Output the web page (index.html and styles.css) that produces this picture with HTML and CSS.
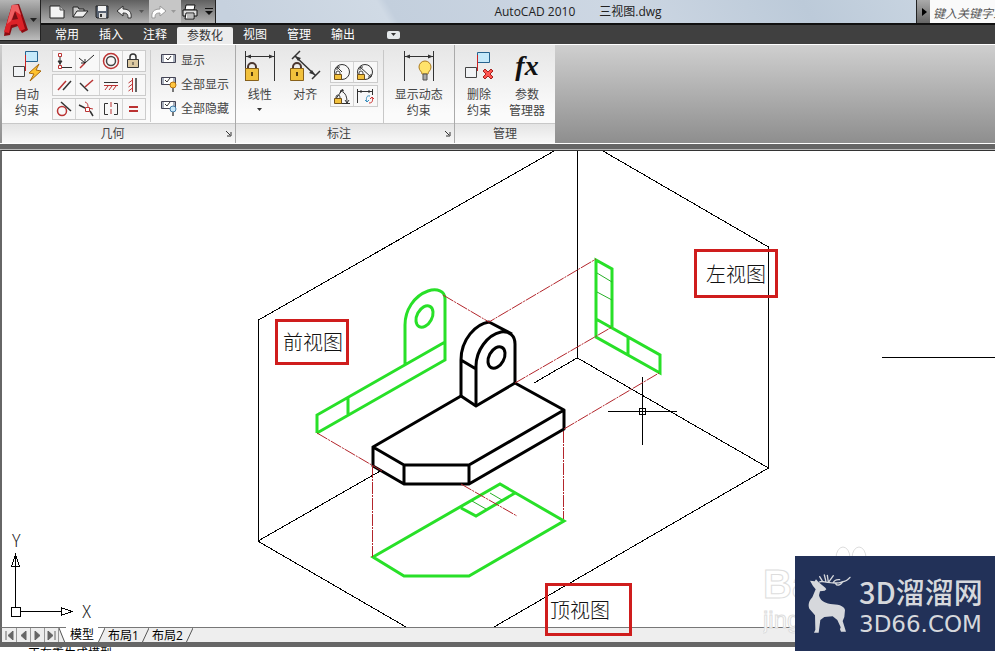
FILE: index.html
```html
<!DOCTYPE html>
<html lang="zh-CN">
<head>
<meta charset="utf-8">
<title>AutoCAD 2010 三视图.dwg</title>
<link rel="stylesheet" href="styles.css">
</head>
<body>
<header class="top">
  <button class="app" aria-label="应用程序菜单">
    <svg width="40" height="40" viewBox="0 0 40 40"><path d="M4 36 5 29 12 5l7-1 9 26-6 3-4-7-6 2-2 7z" fill="#8d0b11"/><path d="M4 32 12 5h6l7 24-5 2-3-7-6 1-2 8z" fill="#dc2228"/><path d="m12 20 3-9 3 8z" fill="#7a1015"/><path d="M12 5h6l3 10-6-4-4 10-4 3z" fill="#ff9b9b" opacity=".5"/><path d="M30 18h7l-3.500 4z" fill="#222"/></svg>
  </button>
  <div class="top-main">
    <div class="titlebar">
      <div class="quick">
        <button aria-label="新建"><svg width="18" height="18" viewBox="0 0 18 18"><path d="M2 3h10l4 4v8H2z" fill="#f3f3f3" stroke="#222"/><path d="M12 3v4h4" fill="#bbb" stroke="#555"/></svg></button>
        <button aria-label="打开"><svg width="18" height="18" viewBox="0 0 18 18"><path d="M2 14V4h5l1 2h5v3" fill="#ccc" stroke="#222"/><path d="m2 14 4-6h11l-5 6z" fill="#eee" stroke="#222"/></svg></button>
        <button aria-label="保存"><svg width="18" height="18" viewBox="0 0 18 18"><path d="M3 3h12v12H4l-1-1z" fill="#596372" stroke="#222"/><path d="M5 3h8v5H5z" fill="#f3f3f3"/><path d="M6 10h7v5H6z" fill="#ddd"/><path d="M7 11h2v3H7z" fill="#333"/></svg></button>
        <button aria-label="放弃"><svg width="18" height="18" viewBox="0 0 18 18"><path d="m1 8 6-5v3c6 0 9 3 8 9h-3c0-4-1-5-5-5v3z" fill="#eee" stroke="#333"/></svg></button>
        <button class="drop" aria-label="放弃列表"><svg width="5" height="4"><path d="M0 0h5L2.500 3z" fill="#555"/></svg></button>
        <button class="pale" aria-label="重做"><svg width="18" height="18" viewBox="0 0 18 18"><path d="m17 8-6-5v3c-6 0-9 3-8 9h3c0-4 1-5 5-5v3z" fill="#fff" stroke="#999"/></svg></button>
        <button class="drop pale" aria-label="重做列表"><svg width="5" height="4"><path d="M0 0h5L2.500 3z" fill="#999"/></svg></button>
        <button aria-label="打印"><svg width="18" height="18" viewBox="0 0 18 18"><path d="M5 2h9l-1 5H4z" fill="#fff" stroke="#111"/><path d="M2 7h14v6H2z" fill="#ddd" stroke="#111"/><path d="M5 10h8v6H4z" fill="#fff" stroke="#111"/><path d="M6 12h6M6 14h6" stroke="#777"/></svg></button>
        <button class="drop" aria-label="自定义"><svg width="8" height="8"><path d="M0 .5h8" stroke="#111"/><path d="M0 3h8L4 7z" fill="#111"/></svg></button>
      </div>
      <h1 class="title"><span>AutoCAD 2010</span><span>三视图.dwg</span></h1>
      <div class="search">
        <button aria-label="展开搜索"><svg width="5" height="8"><path d="M0 0v8l5-4z" fill="#000"/></svg></button>
        <input type="text" aria-label="搜索" placeholder="键入关键字或短语">
      </div>
    </div>
    <nav class="tabs">
      <button>常用</button><button>插入</button><button>注释</button><button class="on">参数化</button><button>视图</button><button>管理</button><button>输出</button>
      <button class="min" aria-label="最小化功能区"><svg width="13" height="8"><rect width="13" height="8" rx="2" fill="#e4e8ea"/><path d="M4 2h5L6.500 5z" fill="#333"/></svg></button>
    </nav>
  </div>
</header>

<main class="ribbon">
  <section class="panel geo">
    <div class="body">
      <button class="big"><svg width="32" height="32" viewBox="0 0 32 32"><path d="M14.500 1.500h12v10h-12z" fill="#c5e9fa" stroke="#27638e"/><path d="M2.500 16.500h11v10h-11z" fill="#f1f3f5" stroke="#444"/><path d="M14.500 5v16" stroke="#c22"/><path d="m28 14-10 9 5 1-4 7 11-10-5-1z" fill="#ffc22d" stroke="#a8690b"/></svg><span>自动<br>约束</span></button>
      <div class="grid four">
        <button aria-label="重合"><svg viewBox="0 0 22 20"><path d="M7 5v10" stroke="#333"/><path d="m5 10 2 3 2-3zM9 16.500h10" stroke="#333" fill="#333"/><path d="M5.500 2.500h3v3h-3zM5.500 14.500h3v3h-3z" fill="#fff" stroke="#b33"/></svg></button>
        <button aria-label="共线"><svg viewBox="0 0 22 20"><path d="m4 17 5-5" stroke="#b33" stroke-width="1.500"/><path d="m9 12 9-8M3 7l6 5M9 8v4H5" stroke="#222" fill="none"/></svg></button>
        <button aria-label="同心"><svg viewBox="0 0 22 20"><circle cx="11" cy="10" r="7.500" fill="none" stroke="#b33" stroke-width="1.500"/><circle cx="11" cy="10" r="4.500" fill="none" stroke="#444" stroke-width="1.500"/></svg></button>
        <button aria-label="固定"><svg viewBox="0 0 22 20"><path d="M7 9V6a3 3 0 0 1 6 0v3" fill="none" stroke="#333" stroke-width="1.500"/><path d="M4.500 8.500h11v8h-11z" fill="#dcc9a1" stroke="#333"/><path d="M10 11v3" stroke="#333"/></svg></button>
      </div>
      <div class="grid four">
        <button aria-label="平行"><svg viewBox="0 0 22 20"><path d="m5 15 8-9" stroke="#b33" stroke-width="1.500"/><path d="m10 15 8-9" stroke="#333" stroke-width="1.500"/></svg></button>
        <button aria-label="垂直"><svg viewBox="0 0 22 20"><path d="m4 8 8 8" stroke="#333" stroke-width="1.500"/><path d="m9 12 8-7" stroke="#b33" stroke-width="1.500"/></svg></button>
        <button aria-label="水平"><svg viewBox="0 0 22 20"><path d="M4 7.500h14" stroke="#333"/><path d="M4 10.500h14M8 11l-3 4m7-4-3 4m7-4-3 4" stroke="#b33"/></svg></button>
        <button aria-label="竖直"><svg viewBox="0 0 22 20"><path d="M13 3v14" stroke="#333" stroke-width="1.500"/><path d="M9.500 3v14m0-12-4 3m4 1-4 3m4 1-4 3" stroke="#b33"/></svg></button>
      </div>
      <div class="grid four">
        <button aria-label="相切"><svg viewBox="0 0 22 20"><circle cx="9" cy="12" r="4.500" fill="none" stroke="#b33" stroke-width="1.500"/><path d="m8 3 10 9" stroke="#333" stroke-width="1.500"/></svg></button>
        <button aria-label="平滑"><svg viewBox="0 0 22 20"><path d="m3 6 6 3m5 3 3 5" stroke="#333" stroke-width="1.500" fill="none"/><path d="M9 3c3 1 3 3 3 6l5 1" stroke="#b33" fill="none"/><path d="M9.500 8.500h4v4h-4z" fill="#fff" stroke="#b33"/></svg></button>
        <button aria-label="对称"><svg viewBox="0 0 22 20"><path d="M8 4.500H4.500v11H8m6-11h3.500v11H14" fill="none" stroke="#333"/><path d="M11 3v14" stroke="#b33" stroke-dasharray="5 2"/></svg></button>
        <button aria-label="相等"><svg viewBox="0 0 22 20"><path d="M6 8h9M6 12h9" stroke="#b33" stroke-width="2"/></svg></button>
      </div>
      <div class="list">
        <button><svg width="17" height="17" viewBox="0 0 17 17"><path d="M1.500 2.500h14v8h-14z" fill="#aab1bd" stroke="#445"/><path d="M4 3h9v7H4z" fill="#fff"/><path d="m6 6 2 2 3-4" fill="none" stroke="#333"/></svg>显示</button>
        <button><svg width="17" height="17" viewBox="0 0 17 17"><path d="M1.500 1.500h14v7h-14z" fill="#aab1bd" stroke="#445"/><path d="M4 2h9v6H4z" fill="#fff"/><path d="m5 4 2 2 3-4" fill="none" stroke="#333"/><circle cx="13" cy="9" r="3" fill="#ffc640" stroke="#b5730e"/><path d="M12 12h2v4h-2z" fill="#777"/></svg>全部显示</button>
        <button><svg width="17" height="17" viewBox="0 0 17 17"><path d="M1.500 1.500h14v7h-14z" fill="#aab1bd" stroke="#445"/><path d="M4 2h9v6H4z" fill="#fff"/><path d="m5 4 2 2 3-4" fill="none" stroke="#333"/><circle cx="13" cy="9" r="3" fill="#c8e8fa" stroke="#407ba8"/><path d="M12 12h2v4h-2z" fill="#777"/></svg>全部隐藏</button>
      </div>
    </div>
    <h2>几何<svg class="launch" width="6" height="6"><path d="m0 0 4 4M5 1v4H1" stroke="#333" fill="none"/></svg></h2>
  </section>

  <section class="panel dim">
    <div class="body">
      <button class="big"><svg width="32" height="32" viewBox="0 0 32 32"><path d="M1.500 1v30M30.500 1v30M2 6.500h28" stroke="#333"/><path d="m2 6.500 5-2v4zM30 6.500l-5-2v4z" fill="#333"/><path d="M4 19v-2a4 4 0 0 1 8 0v2" fill="none" stroke="#4b3730" stroke-width="2"/><path d="M1.500 18.500h13v12h-13z" fill="#f2c13c" stroke="#88611a"/><path d="M8 22v4" stroke="#553b0e" stroke-width="2"/></svg><span>线性</span><svg width="5" height="3"><path d="M0 0h5L2.500 3z" fill="#333"/></svg></button>
      <button class="big"><svg width="32" height="32" viewBox="0 0 32 32"><path d="m3 9 8-8m12 28 8-8M6 6l20 19" stroke="#333" stroke-width="1.500"/><path d="m6 6 6 2-3 3zM26 25l-6-2 3-3z" fill="#333"/><path d="M4 19v-2a4 4 0 0 1 8 0v2" fill="none" stroke="#4b3730" stroke-width="2"/><path d="M1.500 18.500h13v12h-13z" fill="#f2c13c" stroke="#88611a"/><path d="M8 22v4" stroke="#553b0e" stroke-width="2"/></svg><span>对齐</span></button>
      <div class="pair">
        <div class="grid two">
          <button aria-label="半径"><svg viewBox="0 0 22 20"><circle cx="11" cy="10" r="7.500" fill="none" stroke="#333"/><path d="m11 10-5-5m0 3V5h3" stroke="#333" fill="none"/><path d="M5 12v-1a2 2 0 0 1 4 0v1" fill="none" stroke="#444"/><path d="M3.500 12.500h7v5h-7z" fill="#f2c13c" stroke="#71501a"/></svg></button>
          <button aria-label="直径"><svg viewBox="0 0 22 20"><circle cx="11" cy="10" r="7.500" fill="none" stroke="#333"/><path d="m6 5 11 10M6 8V5h3m8 7v3h-3" stroke="#333" fill="none"/><path d="M5 12v-1a2 2 0 0 1 4 0v1" fill="none" stroke="#444"/><path d="M3.500 12.500h7v5h-7z" fill="#f2c13c" stroke="#71501a"/></svg></button>
        </div>
        <div class="grid two">
          <button aria-label="角度"><svg viewBox="0 0 22 20"><path d="m4 14 8-11M4 17.500h15M10 5c5 2 6 6 6 12M9 7l1-3 3 1m1 9 2 3 2-3" fill="none" stroke="#333"/><path d="M5 12v-1a2 2 0 0 1 4 0v1" fill="none" stroke="#444"/><path d="M3.500 12.500h7v5h-7z" fill="#f2c13c" stroke="#71501a"/></svg></button>
          <button aria-label="转换"><svg viewBox="0 0 22 20"><path d="M3.500 3v14M18.500 3v6M4 5.500h14M7 4v3m8-3v3" stroke="#333"/><path d="M16 10c-4-1-4 3-3 6m-2-2 2 2 2-2" stroke="#368cbd" fill="none"/><path d="M15 17c4 0 4-3 3-6m-2 2 2-2 2 2" stroke="#c33" fill="none"/></svg></button>
        </div>
      </div>
      <button class="big wide"><svg width="32" height="32" viewBox="0 0 32 32"><path d="M1.500 1v30M30.500 1v30M2 6.500h28" stroke="#333"/><path d="m2 6.500 5-2v4zM30 6.500l-5-2v4z" fill="#333"/><path d="M19 24c0-3-3-3-3-7a5.500 5.500 0 0 1 12 0c0 4-3 4-3 7z" fill="#ffe36b" stroke="#ad7c1f"/><path d="M20 24h4v6h-4z" fill="#aaa" stroke="#555"/></svg><span>显示动态<br>约束</span></button>
    </div>
    <h2>标注<svg class="launch" width="6" height="6"><path d="m0 0 4 4M5 1v4H1" stroke="#333" fill="none"/></svg></h2>
  </section>

  <section class="panel manage">
    <div class="body">
      <button class="big"><svg width="32" height="32" viewBox="0 0 32 32"><path d="M14.500 2.500h12v10h-12z" fill="#c5e9fa" stroke="#27638e"/><path d="M2.500 17.500h11v10h-11z" fill="#f1f3f5" stroke="#444"/><path d="M14.500 5v16" stroke="#c22"/><path d="m20 21 2-2 3 3 3-3 2 2-3 3 3 3-2 2-3-3-3 3-2-2 3-3z" fill="#ff5550" stroke="#a5221f"/></svg><span>删除<br>约束</span></button>
      <button class="big"><i class="fx">fx</i><span>参数<br>管理器</span></button>
    </div>
    <h2>管理</h2>
  </section>
</main>

<div class="splitter"></div>

<section class="canvas">
  <svg class="drawing" role="img" aria-label="三视图">
    <g transform="translate(-2 -151)" fill="none">
      <g class="thin">
        <path d="M554 151 258.500 320v221.500L406 627M577.500 151v207L768.500 468 494 627M603 151l165.500 96v221M577 358l-43 25M382 470l-124 71M882 357.500h2000"/>
        <path d="M608 411.500h69M642.500 377v68M639.500 408.500h6v6h-6z"/>
        <path d="M11.500 607.500h9v9h-9zM15.500 607v-41M20 611.500h41"/>
        <path d="m15.500 555-4 11.500h8zM15.500 557v9M72 611.500l-11-4v8z"/>
      </g>
      <g class="green">
        <path d="M317 433v-18l128-73M317 433l128-73v-61c0-8-8-11-17-8-14 5-23 19-23 34v39M348 397v18"/>
        <ellipse cx="424.500" cy="316.500" rx="7.500" ry="11.500" transform="rotate(28 424.500 316.500)"/>
        <path d="M596 319v-59l16 9v59M596 319v18l64 36v-18zM628 338v17"/>
        <path d="m373 557 127-73 64 37-95 55h-65zM461 508l15 8 39-23"/>
      </g>
      <path class="hair" d="m597 273 15 9m-15 10 15 8m-140 201 14 8m4-16 12 7"/>
      <g class="solid">
        <path d="m461 396-88 51 31 18h65l95-55-49-27-39 23zM373 447v19l31 18h65l95-55v-19M404 465v19M469 465v19"/>
        <path d="M461 396v-36l15 9M461 360c0-21 15-36 28-38l23 12M476 406v-40c0-15 11-31 25-34 9-1 14 4 14 12v40"/>
        <ellipse cx="496.500" cy="357.500" rx="7.500" ry="11.500" transform="rotate(28 496.500 357.500)"/>
      </g>
      <g class="axis">
        <path d="m443 295 46 27 107-63M515 383l97-56M564 429l95-56M317 433l65 38M461 484l56 32"/>
        <path d="M372.500 466v91M563.500 431v88"/>
      </g>
      <text x="12" y="547">Y</text>
      <text x="82" y="618">X</text>
    </g>
  </svg>
  <span class="note front">前视图</span>
  <span class="note left">左视图</span>
  <span class="note plan">顶视图</span>
</section>

<footer class="layouts">
  <button class="nav" aria-label="第一个"><svg width="9" height="9"><path d="M1 0v9M8 0v9L3 4.500z"/></svg></button>
  <button class="nav" aria-label="上一个"><svg width="9" height="9"><path d="M7 0v9L2 4.500z"/></svg></button>
  <button class="nav" aria-label="下一个"><svg width="9" height="9"><path d="M2 0v9l5-4.500z"/></svg></button>
  <button class="nav" aria-label="最后一个"><svg width="9" height="9"><path d="M8 0v9M1 0v9l5-4.500z"/></svg></button>
  <svg class="slant" width="7" height="15"><path d="M0 0h7v15z" fill="#fff"/><path d="m0 0 6 15"/></svg>
  <button class="sheet on">模型</button>
  <svg class="slant" width="7" height="15"><path d="M0 0h7L0 15z" fill="#fff"/><path d="M7 0 0 15"/></svg>
  <button class="sheet">布局1</button>
  <svg class="slant" width="7" height="15"><path d="M7 0 0 15"/></svg>
  <button class="sheet">布局2</button>
  <svg class="slant" width="7" height="15"><path d="M7 0 0 15"/></svg>
</footer>
<div class="command">正在重生成模型。</div>

<div class="ghost"><svg width="36" height="16"><ellipse cx="10" cy="12" rx="7" ry="11"/><ellipse cx="26" cy="12" rx="7" ry="11"/></svg><b>Bai</b><span>jingyan</span></div>
<aside class="brand">
  <svg width="45" height="60" viewBox="200 130 135 180"><path d="m209 153 14 2 4-6 8 9 20 16 3 5-5 4-14 2-3 12c3 15 15 23 34 26 20 1 42 4 44 18l-2 21-5 12 10 32h-15l-3-7 2-6-10-22-14-11-25 2-12 9-5 38h-14l4-9-1-43-17-20c-5-12 0-25 9-34l10-24-8-10z" fill="#d6d8dc"/><path d="M237 157c9-4 14 0 24 1 23 3 30 4 43-1 12-2 18-5 25-14M247 156l-9-15M257 156l-5-20M264 157l-3-20M266 156l13-18M278 160c4-10 10-11 20-10M286 162c4 8 14 4 20-4" fill="none" stroke="#d6d8dc" stroke-width="4" stroke-linecap="round"/></svg>
  <div><strong>3D溜溜网</strong><span>3D66.COM</span></div>
</aside>
</body>
</html>
```
FILE: styles.css
```css
* { box-sizing: border-box; }
body {
  margin: 0;
  height: 100vh;
  display: flex;
  flex-direction: column;
  position: relative;
  overflow: hidden;
  background: #fff;
  font: 12px/16px "Open Sans", "Noto Sans CJK SC", sans-serif;
  color: #444;
}
button {
  border: 0;
  padding: 0;
  margin: 0;
  background: none;
  font: inherit;
  color: inherit;
}
svg { display: block; flex: none; }
h1, h2 { margin: 0; font: inherit; }

.top { display: flex; background: #404040; }
.app {
  width: 41px;
  height: 41px;
  border: solid #222;
  border-width: 0 1px 1px 0;
  background: linear-gradient(#b5b5b5, #777 50%, #bdbdbd);
}
.top-main { flex: 1; min-width: 0; }
.titlebar {
  display: flex;
  height: 25px;
  border-bottom: 2px solid #111;
  background: linear-gradient(60deg, #c6d1de 20%, #d0dae5 36%, #c3cfdd 37%, #cdd7e3 60%, #bccad9 80%, #cfdae5);
}
.quick {
  display: flex;
  align-items: center;
  width: 175px;
  padding-left: 7px;
  border-right: 1px solid #222;
  background: linear-gradient(#606060, #b0b0b0);
}
.quick button { width: 23px; height: 100%; display: flex; align-items: center; }
.quick .drop { width: 10px; }
.quick .pale { background: #c6c6c6; }
.quick button:last-child { margin-left: 1px; }
.title {
  flex: 1;
  display: flex;
  justify-content: center;
  gap: 24px;
  padding-left: 24px;
  line-height: 24px;
  color: #222;
}
.search { width: 79px; display: flex; overflow: hidden; }
.search button {
  width: 14px;
  flex: none;
  padding-left: 5px;
  background: linear-gradient(#aaa, #666);
  border-left: 1px solid #222;
}
.search input {
  width: 120px;
  flex: none;
  border: 0;
  padding: 4px 3px 0;
  background: #fafafa;
  font: italic 12px/16px "Open Sans", "Noto Sans CJK SC", sans-serif;
}
.search input::placeholder { color: #555; }
.tabs { display: flex; height: 19px; padding-left: 4px; color: #fff; }
.tabs button { padding: 0 10px; line-height: 20px; }
.tabs .on {
  margin-top: 2px;
  line-height: 18px;
  background: #ededed;
  color: #333;
  border-radius: 2px 2px 0 0;
}
.tabs .min { margin-left: 12px; }

.ribbon {
  display: flex;
  height: 100px;
  padding-left: 2px;
  border: solid #fff;
  border-width: 1px 0;
  background: linear-gradient(#cfcfcf, #8e8e8e);
}
.panel {
  display: flex;
  flex-direction: column;
  border-right: 1px solid #aaa;
  background: linear-gradient(#e6e6e6, #fbfbfb 70%);
}
.geo { width: 234px; }
.dim { width: 219px; }
.manage { width: 100px; border: 0; }
.body { flex: 1; display: flex; position: relative; padding-top: 5px; }
.dim .body { padding-left: 1px; }
.panel h2 {
  height: 20px;
  padding-right: 12px;
  display: flex;
  justify-content: center;
  align-items: center;
  position: relative;
  border-top: 1px solid #c8c8c8;
  background: linear-gradient(#e4e4e4, #f8f8f8);
}
.manage h2 { padding-right: 0; }
.launch { position: absolute; right: 3px; bottom: 6px; }
.big {
  width: 46px;
  display: flex;
  flex-direction: column;
  align-items: center;
  gap: 5px;
  line-height: 16px;
}
.wide { width: 72px; border-left: 1px solid #c8c8c8; }
.geo .body { display: grid; grid-template: repeat(3, 24px) / 50px 94px 1fr; }
.geo .big { grid-row: 1 / 4; width: 50px; }
.geo .grid { grid-column: 2; }
.geo .list { grid-column: 3; grid-row: 1 / 4; }
.grid {
  display: flex;
  height: 22px;
  border: 1px solid #ccc;
  background: #f8f8f8;
}
.grid button { flex: 1; }
.grid button + button { border-left: 1px solid #d4d4d4; }
.grid svg { width: 22px; height: 20px; }
.list {
  display: flex;
  flex-direction: column;
  margin-left: 4px;
  padding-left: 9px;
  border-left: 1px solid #ccc;
}
.list button { display: flex; align-items: center; gap: 4px; height: 24px; padding-bottom: 2px; white-space: nowrap; }
.list svg { margin-top: -2px; }
.pair { display: flex; flex-direction: column; gap: 2px; width: 48px; margin: 11px 5px 0 2px; }
.manage .big { width: 48px; }
.fx {
  height: 32px;
  font: italic bold 28px/32px "Liberation Serif", serif;
  color: #111;
}

.splitter { height: 7px; border-bottom: 2px solid #bbb; background: #666; }
.canvas {
  flex: 1;
  position: relative;
  border-left: 2px solid #666;
  border-top: 1px solid #333;
  margin-top: -1px;
}
.drawing { width: 100%; height: 100%; position: absolute; overflow: hidden; }
.drawing text { fill: #222; font: 300 17px "Noto Sans CJK SC", sans-serif; }
.thin { stroke: #000; shape-rendering: crispEdges; }
.green { stroke: #28e028; stroke-width: 3; }
.hair { stroke: #28b028; }
.solid { stroke: #000; stroke-width: 3; stroke-linejoin: round; }
.axis { stroke: #b3262c; stroke-dasharray: 12 1 2 1; }
.drawing text { stroke: none; }
.note {
  position: absolute;
  z-index: 2;
  display: flex;
  align-items: center;
  border: 3px solid #cf1d1d;
  color: #111;
  font: 300 20px/24px "Noto Sans CJK SC", sans-serif;
}
.front { left: 273px; top: 168px; width: 74px; height: 46px; padding-left: 5px; }
.left { left: 692px; top: 98px; width: 84px; height: 49px; padding-left: 9px; }
.plan { left: 543px; top: 432px; width: 87px; height: 53px; padding-left: 2px; }

.layouts {
  display: flex;
  height: 15px;
  padding-left: 1px;
  border-top: 1px solid #777;
  border-left: 2px solid #666;
  background: #eee;
  color: #000;
}
.nav { width: 14px; padding: 0 2px; border-right: 1px solid #999; }
.nav svg path { fill: #666; stroke: #666; }
.slant path:last-child { fill: none; stroke: #555; }
.sheet { padding: 0 4px; line-height: 16px; }
.sheet + .slant + .sheet { padding: 0 3px; }
.sheet.on { background: #fff; margin-top: -1px; }
.command {
  height: 9px;
  border-top: 5px solid #666;
  padding-left: 28px;
  overflow: hidden;
  color: #000;
  line-height: 14px;
}

.ghost {
  position: absolute;
  right: 125px;
  bottom: 17px;
  width: 107px;
  overflow: hidden;
  color: #fff;
  -webkit-text-stroke: 1px #ddd;
  font: 24px/28px "Liberation Sans", sans-serif;
}
.ghost svg { margin-left: 70px; fill: none; stroke: #ddd; }
.ghost b { display: block; font-size: 40px; line-height: 44px; }
.brand {
  position: absolute;
  right: 0;
  bottom: 0;
  z-index: 3;
  display: flex;
  gap: 7px;
  width: 200px;
  height: 95px;
  padding: 17px 0 0 12px;
  background: #223158;
  color: #d6d8dc;
}
.brand div { margin-top: -2px; }
.brand strong {
  display: block;
  font: 500 29px/40px "Noto Sans CJK SC", sans-serif;
  white-space: nowrap;
}
.brand span { display: block; font: 23px/26px "DejaVu Sans", sans-serif; }
```
